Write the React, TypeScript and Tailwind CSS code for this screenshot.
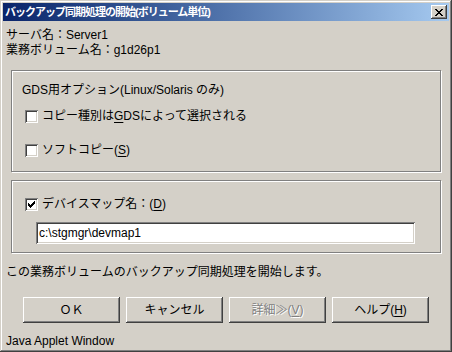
import type { ReactNode } from 'react';

const FONT = "font-['Liberation_Sans','Noto_Sans_CJK_JP',sans-serif]";

// Win2000 style bevels
const RAISED =
  'shadow-[inset_-1px_-1px_#404040,inset_1px_1px_#ffffff,inset_-2px_-2px_#808080,inset_2px_2px_#d4d0c8]';
const SUNKEN =
  'shadow-[inset_1px_1px_#808080,inset_-1px_-1px_#ffffff,inset_2px_2px_#404040,inset_-2px_-2px_#d4d0c8]';

function Key({ children }: { children: ReactNode }) {
  return <span className="underline underline-offset-[2px]">{children}</span>;
}

function Checkbox({ checked }: { checked?: boolean }) {
  return (
    <div className={`flex h-[13px] w-[13px] shrink-0 items-center justify-center bg-white ${SUNKEN}`}>
      {checked && (
        <svg width="7" height="7" viewBox="0 0 7 7" shapeRendering="crispEdges">
          <path d="M0 2h1v3H0zM1 3h1v3H1zM2 4h1v3H2zM3 3h1v3H3zM4 2h1v3H4zM5 1h1v3H5zM6 0h1v3H6z" fill="#000" />
        </svg>
      )}
    </div>
  );
}

function CheckRow({ checked, children }: { checked?: boolean; children: ReactNode }) {
  return (
    <div className="flex h-[16px] items-center gap-[4px] pl-[13px]">
      <Checkbox checked={checked} />
      <span className="leading-[16px]">{children}</span>
    </div>
  );
}

function GroupBox({ className, children }: { className: string; children: ReactNode }) {
  return (
    <div
      className={`ml-[5px] w-[430px] border border-[#808080] shadow-[inset_1px_1px_#ffffff,1px_1px_#ffffff] ${className}`}
    >
      {children}
    </div>
  );
}

function Button({ children, disabled }: { children: ReactNode; disabled?: boolean }) {
  return (
    <div
      className={`flex h-[26px] w-[97px] items-center justify-center ${RAISED} ${
        disabled ? 'text-[#808080] [text-shadow:1px_1px_#ffffff]' : 'text-black'
      }`}
    >
      {children}
    </div>
  );
}

export default function App() {
  return (
    <div
      className={`flex h-[352px] w-[452px] flex-col bg-[#d4d0c8] p-[3px] text-[12px] text-black ${FONT} shadow-[inset_-1px_-1px_#404040,inset_1px_1px_#d4d0c8,inset_-2px_-2px_#808080,inset_2px_2px_#ffffff]`}
    >
      {/* title bar */}
      <div className="flex h-[18px] items-center justify-between bg-gradient-to-r from-[#0a246a] to-[#a6caf0] pl-[2px] pr-[2px]">
        <span className="text-[11px] font-bold leading-[18px] tracking-[-1px] text-white">
          バックアップ同期処理の開始(ボリューム単位)
        </span>
        <div className={`flex h-[14px] w-[16px] items-center justify-center bg-[#d4d0c8] ${RAISED}`}>
          <svg width="8" height="7" viewBox="0 0 8 7" shapeRendering="crispEdges">
            <path
              d="M0 0h2v1H0zM6 0h2v1H6zM1 1h2v1H1zM5 1h2v1H5zM2 2h4v1H2zM3 3h2v1H3zM2 4h4v1H2zM1 5h2v1H1zM5 5h2v1H5zM0 6h2v1H0zM6 6h2v1H6z"
              fill="#000"
            />
          </svg>
        </div>
      </div>

      <div className="flex flex-1 flex-col px-[3px]">
        <div className="mt-[7px] h-[15px] leading-[15px]">サーバ名：Server1</div>
        <div className="h-[15px] leading-[15px]">業務ボリューム名：g1d26p1</div>

        <GroupBox className="mt-[12px] h-[102px] pl-[10px] pt-[11px]">
          <div className="h-[16px] leading-[16px]">GDS用オプション(Linux/Solaris のみ)</div>
          <div className="mt-[10px] -ml-[10px]">
            <CheckRow>
              コピー種別は<Key>G</Key>DSによって選択される
            </CheckRow>
          </div>
          <div className="mt-[18px] -ml-[10px]">
            <CheckRow>
              ソフトコピー(<Key>S</Key>)
            </CheckRow>
          </div>
        </GroupBox>

        <GroupBox className="mt-[8px] h-[73px] pt-[15px]">
          <CheckRow checked>
            デバイスマップ名：(<Key>D</Key>)
          </CheckRow>
          <div
            className={`ml-[24px] mt-[10px] flex h-[22px] w-[379px] items-center bg-white pl-[3px] ${SUNKEN}`}
          >
            c:\stgmgr\devmap1
          </div>
        </GroupBox>

        <div className="mt-[11px] h-[16px] leading-[16px]">
          この業務ボリュームのバックアップ同期処理を開始します。
        </div>

        <div className="ml-[17px] mt-[17px] flex gap-[6px]">
          <Button>ＯＫ</Button>
          <Button>キャンセル</Button>
          <Button disabled>
            詳細≫(<Key>V</Key>)
          </Button>
          <Button>
            ヘルプ(<Key>H</Key>)
          </Button>
        </div>

        <div className="mt-[10px] h-[16px] leading-[16px]">Java Applet Window</div>
      </div>
    </div>
  );
}
